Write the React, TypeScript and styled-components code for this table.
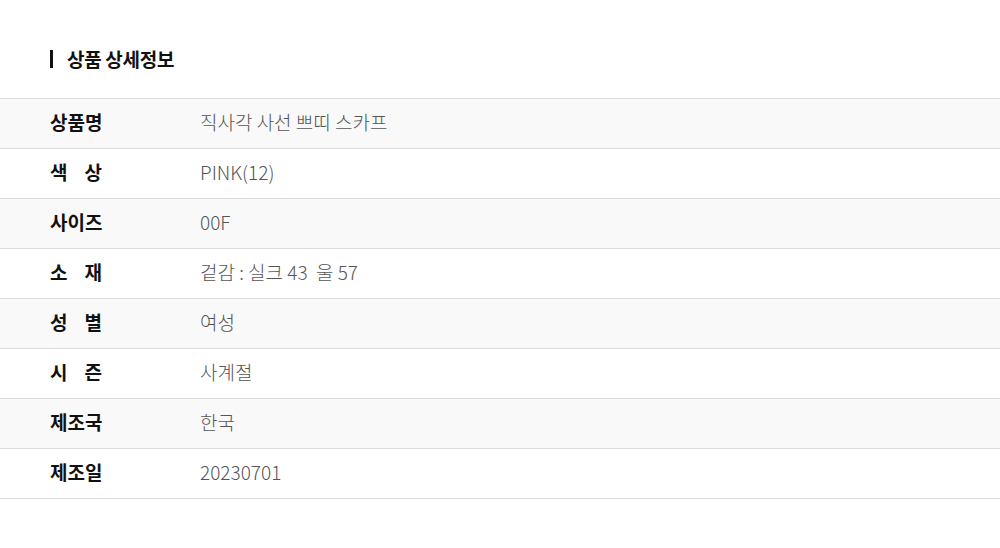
import styled, { createGlobalStyle } from "styled-components";

const GlobalStyle = createGlobalStyle`
  body {
    margin: 0;
    background: #fff;
    font-family: "Noto Sans CJK KR", "Noto Sans", sans-serif;
  }
`;

const rows = [
  { label: "상품명", value: "직사각 사선 쁘띠 스카프" },
  { label: "색 상", value: "PINK(12)" },
  { label: "사이즈", value: "00F" },
  { label: "소 재", value: "겉감 : 실크 43  울 57" },
  { label: "성 별", value: "여성" },
  { label: "시 즌", value: "사계절" },
  { label: "제조국", value: "한국" },
  { label: "제조일", value: "20230701" },
];

const App = () => {
  return (
    <Page>
      <GlobalStyle />
      <Title>상품 상세정보</Title>
      <Table>
        {rows.map((row, i) => (
          <Row key={row.label} $shaded={i % 2 === 0}>
            <Label>{row.label}</Label>
            <Value>{row.value}</Value>
          </Row>
        ))}
      </Table>
    </Page>
  );
};

const Page = styled.div`
  padding-top: 50px;
`;

const Title = styled.h2`
  margin: 0 0 30px 50px;
  padding-left: 14px;
  border-left: 3px solid #111;
  font-size: 19px;
  line-height: 18px;
  font-weight: 700;
  color: #111;
  letter-spacing: -0.3px;
`;

const Table = styled.div`
  border-top: 1px solid #dcdcdc;
`;

const Row = styled.div<{ $shaded: boolean }>`
  display: flex;
  align-items: center;
  height: 50px;
  box-sizing: border-box;
  padding: 0 0 4px 50px;
  border-bottom: 1px solid #dcdcdc;
  background: ${(p) => (p.$shaded ? "#f9f9f9" : "#fff")};
`;

const Label = styled.div`
  width: 52px;
  margin-right: 98px;
  font-size: 19px;
  font-weight: 700;
  color: #111;
  text-align: justify;
  text-align-last: justify;
  white-space: nowrap;
`;

const Value = styled.div`
  font-size: 19px;
  font-weight: 300;
  color: #555;
  white-space: pre;
`;

export default App;
